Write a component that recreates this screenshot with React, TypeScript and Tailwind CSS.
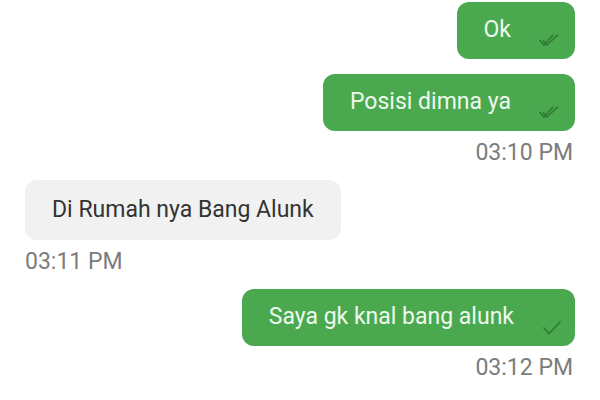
type Msg =
  | { kind: 'out'; text: string; ticks: 1 | 2; time?: string; gap: string }
  | { kind: 'in'; text: string; time?: string; gap: string };

const messages: Msg[] = [
  { kind: 'out', text: 'Ok', ticks: 2, gap: 'mt-[2px]' },
  { kind: 'out', text: 'Posisi dimna ya', ticks: 2, time: '03:10 PM', gap: 'mt-[15px]' },
  { kind: 'in', text: 'Di Rumah nya Bang Alunk', time: '03:11 PM', gap: 'mt-[13px]' },
  { kind: 'out', text: 'Saya gk knal bang alunk', ticks: 1, time: '03:12 PM', gap: 'mt-[13px]' },
];

function DoubleTick() {
  return (
    <svg viewBox="0 0 20 13" className="ml-[28px] mt-[18px] h-[13px] w-[20px] shrink-0" fill="none" stroke="#2e7432" strokeOpacity={0.9} strokeWidth={1.7} strokeLinecap="round" strokeLinejoin="round">
      <path d="M1 6.5l4 4.5L13.5 1.5" />
      <path d="M4.5 7l3.5 4L18.5 1" />
    </svg>
  );
}

function SingleTick() {
  return (
    <svg viewBox="0 0 20 15" className="ml-[28px] mt-[17px] h-[15px] w-[20px] shrink-0" fill="none" stroke="#2e7432" strokeOpacity={0.9} strokeWidth={1.8} strokeLinecap="round" strokeLinejoin="round">
      <path d="M2 8l5 5.5L18 2" />
    </svg>
  );
}

function Outgoing({ m }: { m: Extract<Msg, { kind: 'out' }> }) {
  return (
    <div className={`flex flex-col items-end ${m.gap}`}>
      <div className={`flex h-[57px] items-start rounded-[12px] bg-[#4aa94e] pl-[27px] pt-[14px] ${m.ticks === 2 ? 'pr-[16px]' : 'pr-[13px]'}`}>
        <span className="text-[23px] leading-[28px] text-[#eef8ee]">{m.text}</span>
        {m.ticks === 2 ? <DoubleTick /> : <SingleTick />}
      </div>
      {m.time && (
        <div className="mr-[2px] mt-[8px] text-[23px] leading-[28px] text-[#7c7c7c]">{m.time}</div>
      )}
    </div>
  );
}

function Incoming({ m }: { m: Extract<Msg, { kind: 'in' }> }) {
  return (
    <div className={`flex flex-col items-start ${m.gap}`}>
      <div className="flex h-[60px] items-center rounded-[12px] bg-[#f1f1f1] px-[27px]">
        <span className="text-[23px] leading-[28px] text-[#333333]">{m.text}</span>
      </div>
      <div className="mt-[8px] text-[23px] leading-[28px] text-[#7c7c7c]">{m.time}</div>
    </div>
  );
}

export default function App() {
  return (
    <div className="h-[400px] w-[600px] overflow-hidden bg-white px-[25px] font-['Roboto',sans-serif]">
      {messages.map((m, i) =>
        m.kind === 'out' ? <Outgoing key={i} m={m} /> : <Incoming key={i} m={m} />
      )}
    </div>
  );
}
